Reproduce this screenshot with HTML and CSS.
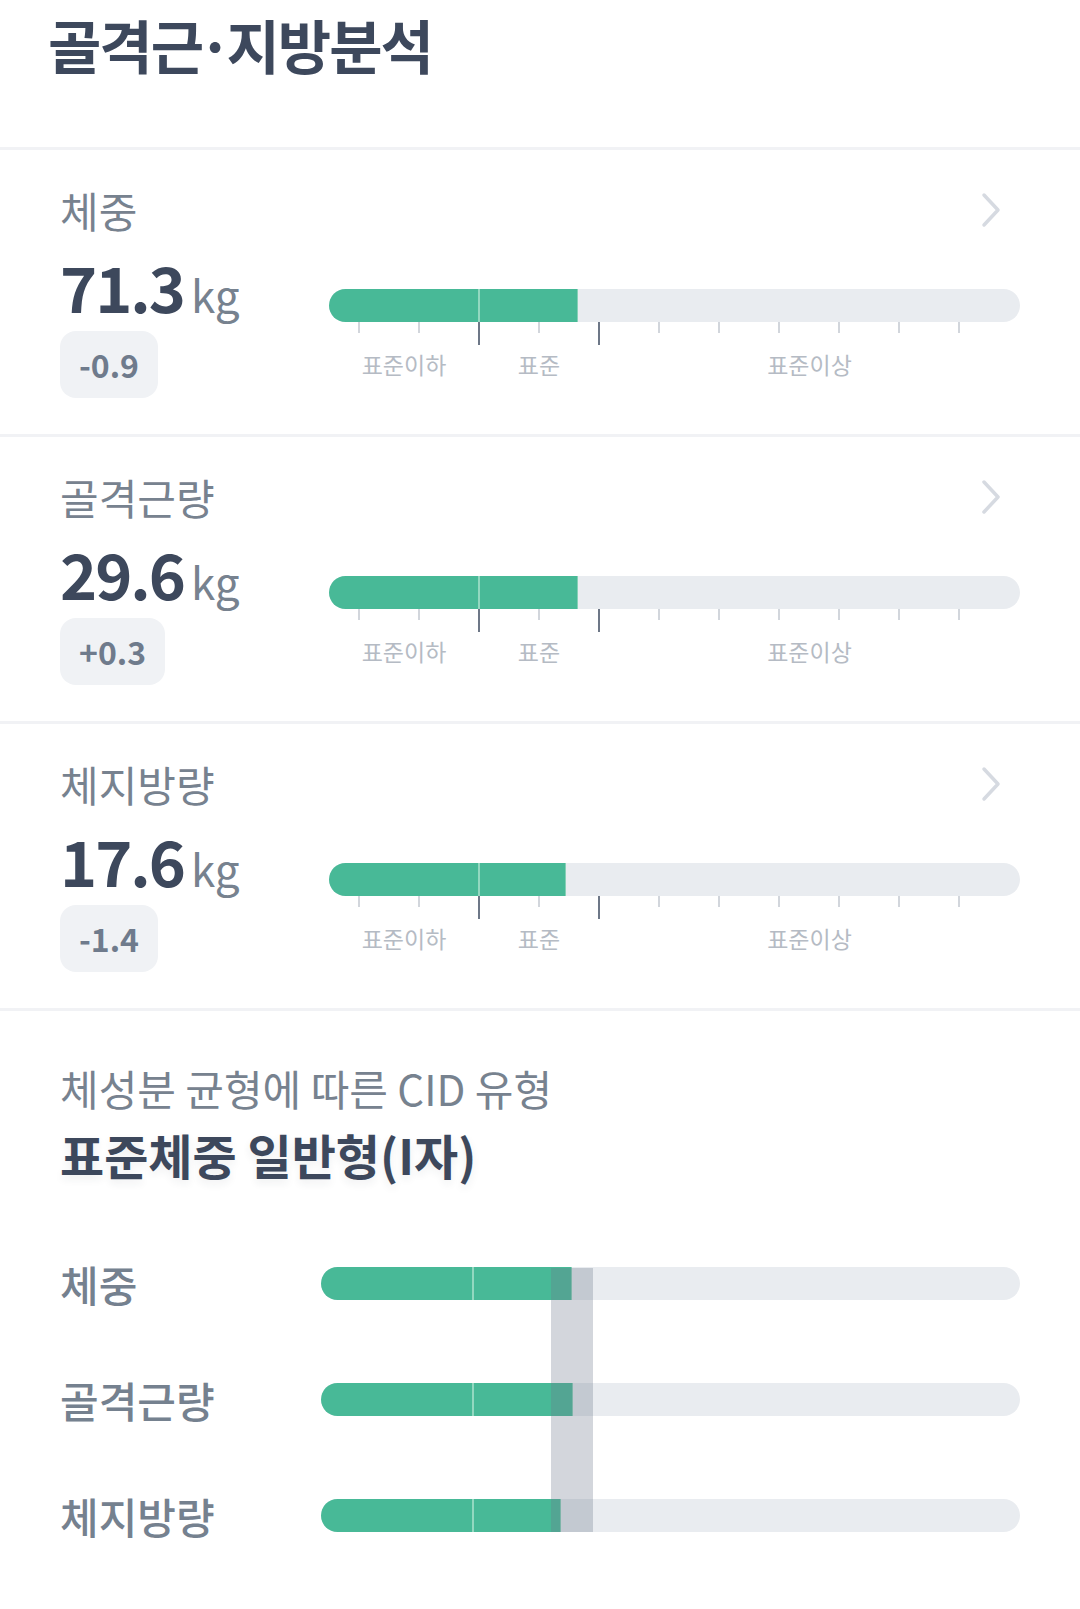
FILE: index.html
```html
<!DOCTYPE html>
<html>
	<head>
		<meta charset="UTF-8">
		<title>골격근·지방분석</title>
		<link rel="stylesheet" href="styles.css">
	</head>
	<body>
		<div class="page">
			<h1 class="title">골격근<span class="dot">·</span>지방분석</h1>

			<section class="metric">
				<div class="metric-head">
					<span class="metric-name">체중</span>
					<svg class="chevron" viewBox="0 0 20 36"><polyline points="3,3 17,18 3,33"/></svg>
				</div>
				<div class="metric-body">
					<div class="metric-info">
						<div class="metric-value"><span class="num">71.3</span><span class="unit">kg</span></div>
						<span class="delta">-0.9</span>
					</div>
					<div class="metric-chart">
						<div class="track"><div class="fill" style="width:36%"></div></div>
						<div class="ticks">
							<i></i><i></i><i class="major"></i><i></i><i class="major"></i><i></i><i></i><i></i><i></i><i></i><i></i>
						</div>
						<div class="ranges"><span class="low">표준이하</span><span class="mid">표준</span><span class="high">표준이상</span></div>
					</div>
				</div>
			</section>

			<section class="metric">
				<div class="metric-head">
					<span class="metric-name">골격근량</span>
					<svg class="chevron" viewBox="0 0 20 36"><polyline points="3,3 17,18 3,33"/></svg>
				</div>
				<div class="metric-body">
					<div class="metric-info">
						<div class="metric-value"><span class="num">29.6</span><span class="unit">kg</span></div>
						<span class="delta">+0.3</span>
					</div>
					<div class="metric-chart">
						<div class="track"><div class="fill" style="width:36%"></div></div>
						<div class="ticks">
							<i></i><i></i><i class="major"></i><i></i><i class="major"></i><i></i><i></i><i></i><i></i><i></i><i></i>
						</div>
						<div class="ranges"><span class="low">표준이하</span><span class="mid">표준</span><span class="high">표준이상</span></div>
					</div>
				</div>
			</section>

			<section class="metric">
				<div class="metric-head">
					<span class="metric-name">체지방량</span>
					<svg class="chevron" viewBox="0 0 20 36"><polyline points="3,3 17,18 3,33"/></svg>
				</div>
				<div class="metric-body">
					<div class="metric-info">
						<div class="metric-value"><span class="num">17.6</span><span class="unit">kg</span></div>
						<span class="delta">-1.4</span>
					</div>
					<div class="metric-chart">
						<div class="track"><div class="fill" style="width:34.3%"></div></div>
						<div class="ticks">
							<i></i><i></i><i class="major"></i><i></i><i class="major"></i><i></i><i></i><i></i><i></i><i></i><i></i>
						</div>
						<div class="ranges"><span class="low">표준이하</span><span class="mid">표준</span><span class="high">표준이상</span></div>
					</div>
				</div>
			</section>

			<section class="cid">
				<div class="cid-caption">체성분 균형에 따른 CID 유형</div>
				<div class="cid-type">표준체중 일반형(I자)</div>
				<div class="cid-bars">
					<div class="cid-row">
						<span class="cid-name">체중</span>
						<div class="track"><div class="fill" style="width:35.9%"></div></div>
					</div>
					<div class="cid-row">
						<span class="cid-name">골격근량</span>
						<div class="track"><div class="fill" style="width:36.1%"></div></div>
					</div>
					<div class="cid-row">
						<span class="cid-name">체지방량</span>
						<div class="track"><div class="fill" style="width:34.3%"></div></div>
					</div>
					<div class="cid-band"></div>
				</div>
			</section>
		</div>
	</body>
</html>
```

FILE: styles.css
```css
body{
	margin: 0;
	background-color: #fff;
	font-family: "Noto Sans CJK KR", "Noto Sans", sans-serif;
	color: #3d485c;
}
.page{
	width: 1080px;
}
.title{
	margin: 0;
	padding: 4px 48px 63px;
	font-size: 58px;
	line-height: 80px;
	font-weight: 700;
	letter-spacing: -2px;
	color: #3d485c;
}
.title .dot{
	margin: 0 -4px;
}

/* 항목 카드 */
.metric{
	box-sizing: border-box;
	height: 287px;
	padding: 34px 60px 0;
	border-top: 3px solid #f1f2f5;
}
.metric-head{
	display: flex;
	justify-content: space-between;
	align-items: center;
	height: 52px;
}
.metric-name{
	font-size: 42px;
	line-height: 52px;
	color: #77828f;
}
.chevron{
	width: 20px;
	height: 36px;
	margin-right: 19px;
}
.chevron polyline{
	fill: none;
	stroke: #d6dae1;
	stroke-width: 3.5;
	stroke-linecap: round;
	stroke-linejoin: round;
}
.metric-body{
	display: flex;
}
.metric-info{
	width: 269px;
	flex: none;
	padding-top: 12px;
}
.metric-value{
	height: 76px;
	font-size: 63px;
	line-height: 76px;
	font-weight: 700;
	letter-spacing: -2px;
	color: #3d485c;
}
.metric-value .unit{
	margin-left: 7px;
	font-size: 44px;
	line-height: 1;
	font-weight: 400;
	letter-spacing: 0;
	color: #77828f;
}
.delta{
	display: inline-block;
	margin-top: 7px;
	height: 67px;
	padding: 0 19px;
	border-radius: 16px;
	background-color: #f0f2f5;
	font-size: 32px;
	line-height: 67px;
	font-weight: 700;
	color: #6f7b8c;
}
.metric-chart{
	flex: 1;
	padding-top: 53px;
}

/* 막대 */
.track{
	height: 33px;
	border-radius: 17px;
	background-color: #e9ecf0;
	overflow: hidden;
}
.fill{
	box-sizing: border-box;
	height: 100%;
	border-right: 1px solid #86d0b6;
	background: linear-gradient(to right, #48b997 149px, #93d8c0 149px, #93d8c0 151px, #48b997 151px);
}
.ticks{
	display: flex;
	gap: 58px;
	height: 23px;
	padding-left: 29px;
}
.ticks i{
	width: 2px;
	height: 11px;
	background-color: #d2d6dc;
}
.ticks i.major{
	height: 23px;
	background-color: #6d7787;
}
.ranges{
	display: flex;
	margin-top: 4px;
	font-size: 23px;
	line-height: 30px;
	color: #b5bbc4;
	text-align: center;
}
.ranges .low{
	width: 150px;
}
.ranges .mid{
	width: 120px;
}
.ranges .high{
	flex: 1;
}

/* CID 유형 */
.cid{
	padding: 51px 60px 78px;
	border-top: 3px solid #f1f2f5;
}
.cid-caption{
	font-size: 42px;
	line-height: 52px;
	color: #77828f;
}
.cid-type{
	margin-top: 9px;
	font-size: 48px;
	line-height: 62px;
	font-weight: 700;
	color: #3d485c;
	text-shadow: 0 4px 8px rgba(40, 50, 70, 0.08);
}
.cid-bars{
	position: relative;
	display: flex;
	flex-direction: column;
	gap: 83px;
	margin-top: 82px;
}
.cid-row{
	display: flex;
	align-items: center;
	height: 33px;
}
.cid-name{
	width: 261px;
	flex: none;
	font-size: 42px;
	line-height: 33px;
	font-weight: 500;
	color: #75818f;
}
.cid-row .track{
	flex: 1;
}
.cid-row .fill{
	background: linear-gradient(to right, #48b997 151px, #93d8c0 151px, #93d8c0 153px, #48b997 153px);
}
.cid-band{
	position: absolute;
	top: 1px;
	bottom: 0;
	left: 491px;
	width: 42px;
	background-color: rgba(110, 120, 140, 0.3);
}
```
